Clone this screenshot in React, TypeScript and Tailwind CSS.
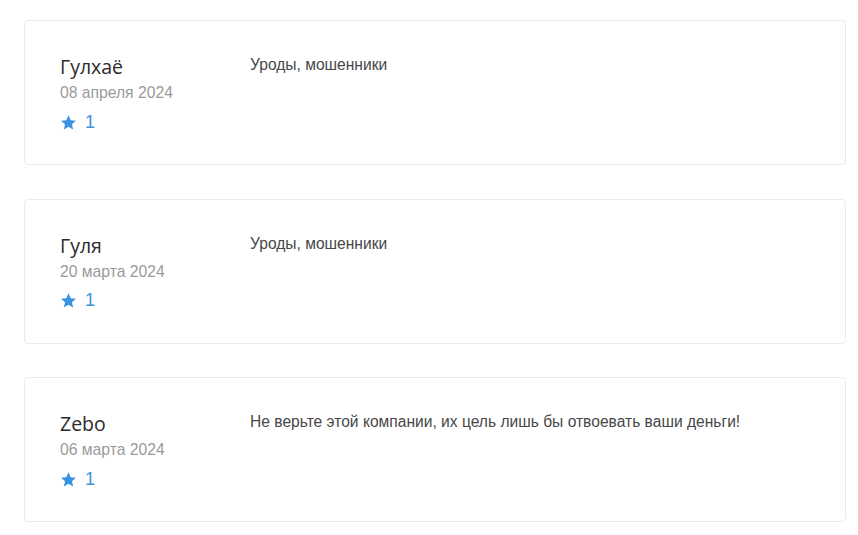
const reviews = [
  { name: "Гулхаё", date: "08 апреля 2024", rating: 1, text: "Уроды, мошенники" },
  { name: "Гуля", date: "20 марта 2024", rating: 1, text: "Уроды, мошенники" },
  {
    name: "Zebo",
    date: "06 марта 2024",
    rating: 1,
    text: "Не верьте этой компании, их цель лишь бы отвоевать ваши деньги!",
  },
];

const Star = () => (
  <svg viewBox="0 0 24 24" className="size-[17px] fill-[#3a93de]">
    <path d="M12 1.8l3.1 6.9 7.4.7-5.6 5 1.7 7.4L12 17.9l-6.6 3.9 1.7-7.4-5.6-5 7.4-.7z" />
  </svg>
);

const App = () => {
  return (
    <div className="min-h-screen bg-white px-[24px] pt-[20px] font-['Liberation_Sans',Arial,sans-serif]">
      <div className="flex w-[822px] flex-col gap-[33.5px]">
        {reviews.map((r) => (
          <div
            key={r.name}
            className="flex h-[145px] rounded-[4px] border border-[#ebebeb] bg-white pl-[35px]"
          >
            <div className="w-[190px] pt-[34px]">
              <div className="font-['Open_Sans',sans-serif] text-[19.5px] leading-[24px] text-[#2b2b2b]">
                {r.name}
              </div>
              <div className="mt-[2px] text-[15.7px] leading-[24px] text-[#9a9a9a]">{r.date}</div>
              <div className="mt-[5px] flex h-[24px] items-center gap-[8px] text-[18px] text-[#3a93de]">
                <Star />
                <span>{r.rating}</span>
              </div>
            </div>
            <div className="pt-[33px] text-[15.6px] leading-[22px] text-[#474747]">{r.text}</div>
          </div>
        ))}
      </div>
    </div>
  );
};

export default App;
